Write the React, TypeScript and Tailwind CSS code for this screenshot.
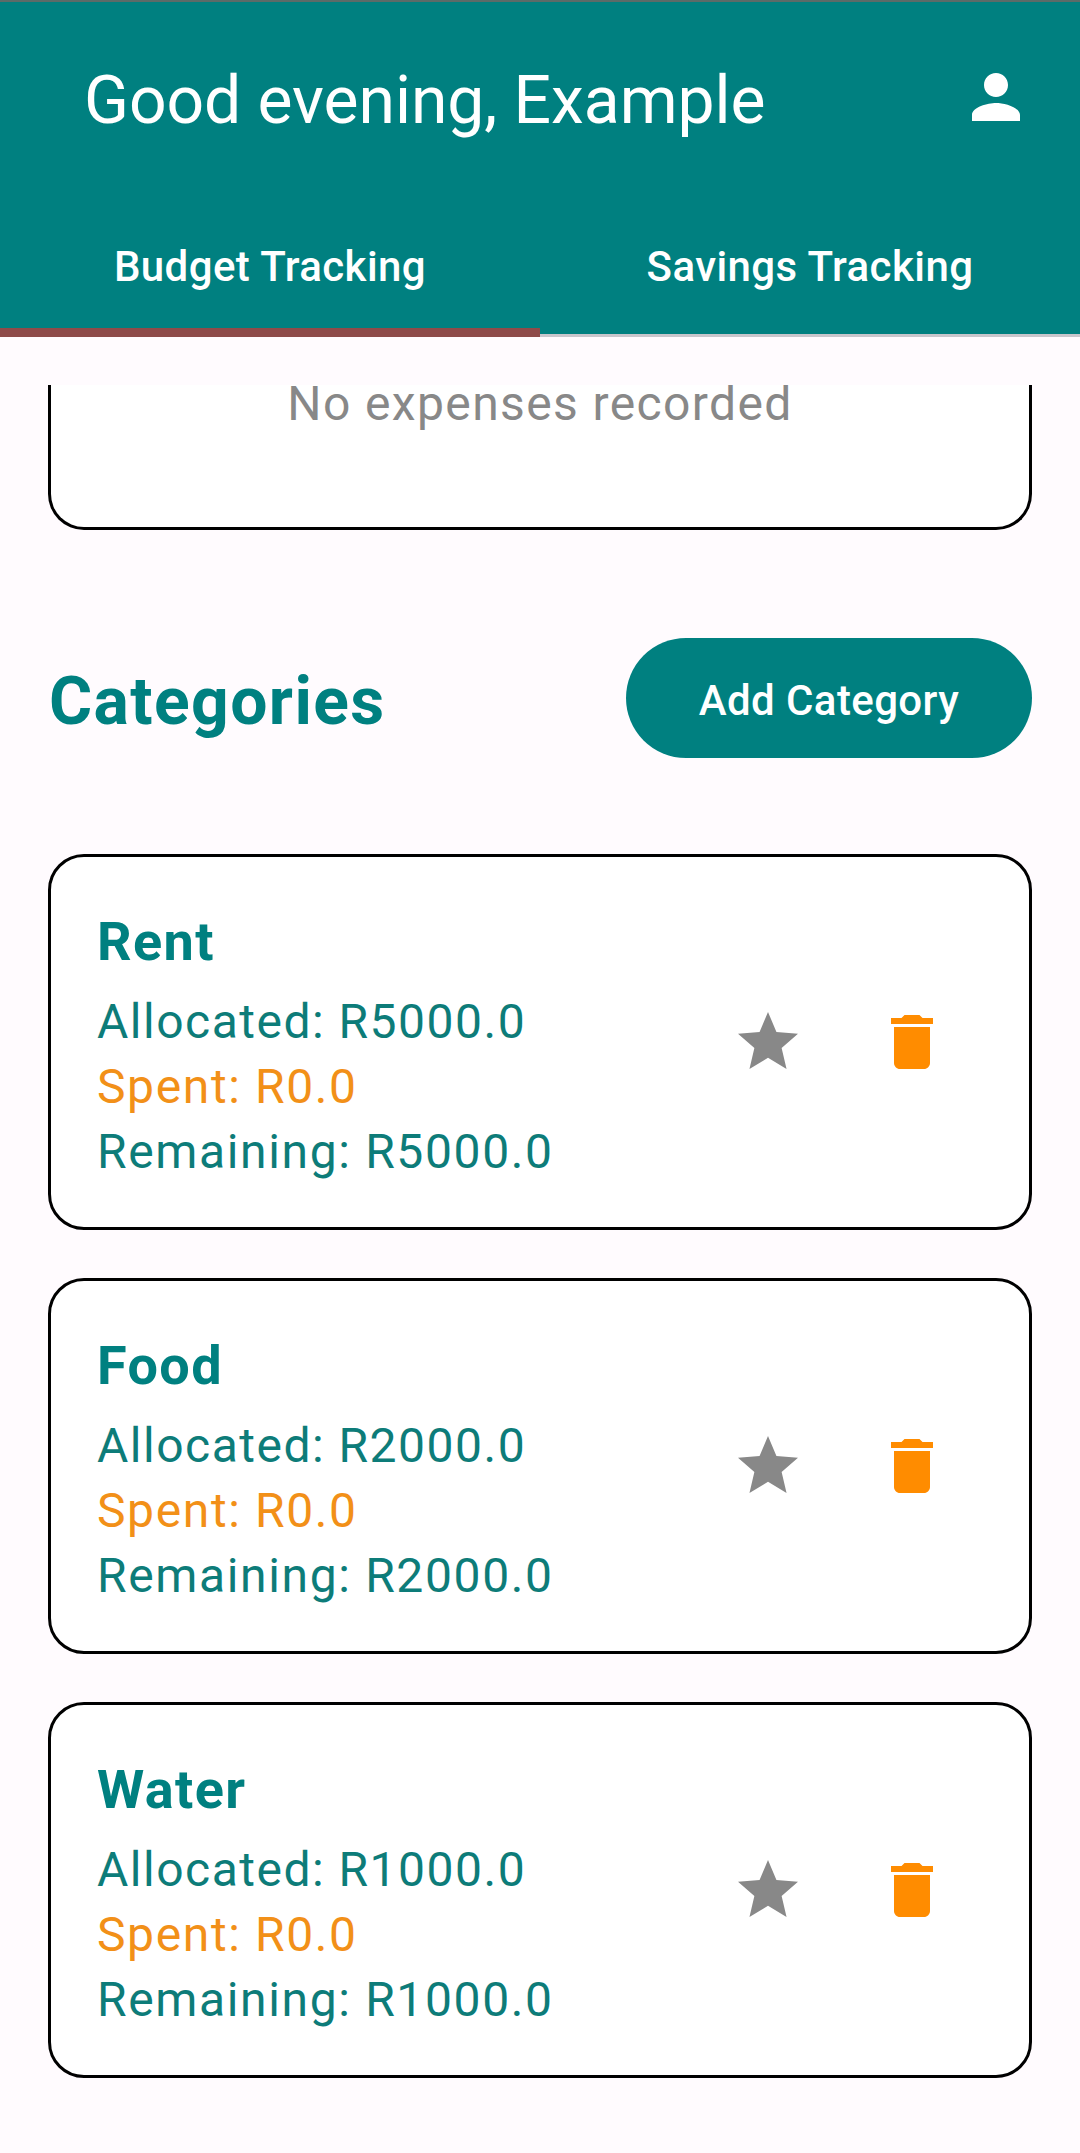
const categories = [
  { name: 'Rent', allocated: 'R5000.0', spent: 'R0.0', remaining: 'R5000.0' },
  { name: 'Food', allocated: 'R2000.0', spent: 'R0.0', remaining: 'R2000.0' },
  { name: 'Water', allocated: 'R1000.0', spent: 'R0.0', remaining: 'R1000.0' },
];

function Icon({ d }: { d: string }) {
  return (
    <svg viewBox="0 0 24 24" className="size-[72px]" fill="currentColor" aria-hidden="true">
      <path d={d} />
    </svg>
  );
}

const PERSON =
  'M12 12c2.21 0 4-1.79 4-4s-1.79-4-4-4-4 1.79-4 4 1.79 4 4 4zm0 2c-2.67 0-8 1.34-8 4v2h16v-2c0-2.66-5.33-4-8-4z';
const STAR =
  'M12 17.27L18.18 21l-1.64-7.03L22 9.24l-7.19-.61L12 2 9.19 8.63 2 9.24l5.46 4.73L5.82 21z';
const TRASH =
  'M6 19c0 1.1.9 2 2 2h8c1.1 0 2-.9 2-2V7H6v12zM19 4h-3.5l-1-1h-5l-1 1H5v2h14V4z';

function Header() {
  return (
    <header className="flex h-[337px] flex-col border-t-2 border-[#5c6b68] bg-[#008080] text-white">
      <div className="flex h-[191px] items-start justify-between pr-12 pl-[84px]">
        <h1 className="mt-[63px] text-[66px] leading-[72px] tracking-[-0.05px]">
          Good evening, Example
        </h1>
        <button className="mt-[59px]" aria-label="Profile">
          <Icon d={PERSON} />
        </button>
      </div>
      <nav className="grid h-36 grid-cols-2 text-[42px] leading-[60px] font-medium tracking-[0.42px]">
        <button className="flex items-start justify-center border-b-[9px] border-[#8e4a49] pt-[44px]">
          Budget Tracking
        </button>
        <button className="flex items-start justify-center border-b-[3px] border-[#c8c6cc] pt-[44px]">
          Savings Tracking
        </button>
      </nav>
    </header>
  );
}

function CategoryCard({ name, allocated, spent, remaining }: (typeof categories)[number]) {
  return (
    <article className="flex h-[376px] items-center justify-between rounded-[36px] border-3 border-black bg-white pr-[45px] pl-[46px]">
      <div className="flex h-full flex-col pt-12 text-[48px] leading-[65px] text-[#0d7c79]">
        <h3 className="mb-[11px] text-[54px] leading-[73px] font-bold tracking-[1.4px] text-[#008080]">
          {name}
        </h3>
        <p className="tracking-[1.5px]">Allocated: {allocated}</p>
        <p className="tracking-[1.62px] text-[#f29018]">Spent: {spent}</p>
        <p className="tracking-[1.64px]">Remaining: {remaining}</p>
      </div>
      <div className="flex">
        <button className="grid size-36 place-items-center text-[#888888]" aria-label="Favourite">
          <Icon d={STAR} />
        </button>
        <button className="grid size-36 place-items-center text-[#ff8c00]" aria-label="Delete">
          <Icon d={TRASH} />
        </button>
      </div>
    </article>
  );
}

export default function App() {
  return (
    <div className="h-[2153px] w-[1080px] overflow-hidden bg-[#fffbfe] font-['Roboto',sans-serif]">
      <Header />
      <main className="mt-12 px-12">
        <section className="flex h-[145px] items-start justify-center overflow-hidden rounded-b-[36px] border-3 border-t-0 border-black bg-white">
          <p className="-mt-[14px] text-[48px] leading-[65px] tracking-[1.38px] text-[#888888]">
            No expenses recorded
          </p>
        </section>
        <section className="mt-[108px] flex h-[120px] items-center justify-between">
          <h2 className="pt-2 pl-px text-[66px] leading-[78px] font-bold tracking-[1.4px] text-[#008080]">
            Categories
          </h2>
          <button className="h-[120px] w-[406px] rounded-full bg-[#008080] pt-[5px] text-[42px] font-medium tracking-[0.4px] text-white">
            Add Category
          </button>
        </section>
        <section className="mt-24 flex flex-col gap-12">
          {categories.map((c) => (
            <CategoryCard key={c.name} {...c} />
          ))}
        </section>
      </main>
    </div>
  );
}
